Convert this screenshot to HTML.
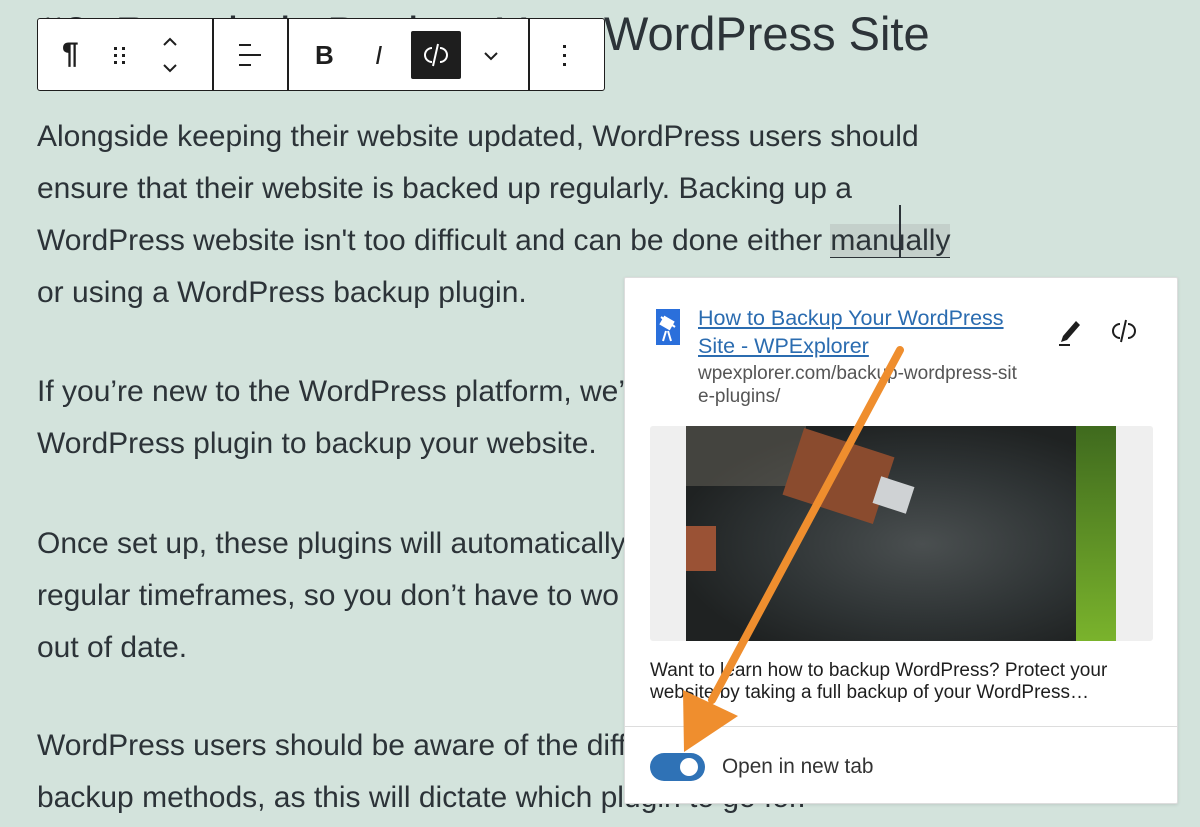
<!DOCTYPE html>
<html><head><meta charset="utf-8"><style>
*{margin:0;padding:0;box-sizing:border-box}
body{width:1200px;height:827px;overflow:hidden;background:#d3e3dc;font-family:"Liberation Sans",sans-serif;color:#2c3338;position:relative}
.h{position:absolute;left:37px;top:6px;font-size:47px;white-space:nowrap;color:#2c3338}
.p{position:absolute;left:37px;font-size:30px;line-height:52px;white-space:nowrap}
.tb{position:absolute;left:37px;top:18px;width:568px;height:73px;background:#fff;border:1.5px solid #1e1e1e;border-radius:3px}
.sep{position:absolute;top:0;bottom:0;width:1.5px;background:#1e1e1e}
.pop{position:absolute;left:624px;top:277px;width:554px;height:527px;background:#fff;border:1px solid #ddd;border-radius:2px;box-shadow:0 1px 3px rgba(0,0,0,.1)}
.ic{position:absolute}
</style></head><body>
<div class="h">#3: Regularly Backup Your WordPress Site</div>
<div class="p" style="top:111px">Alongside keeping their website updated, WordPress users should<br>ensure that their website is backed up regularly. Backing up a<br>WordPress website isn't too difficult and can be done either <span style="background:#c4d0cb;border-bottom:1.5px solid #2c3338">manually</span><br>or using a WordPress backup plugin.</div>
<div style="position:absolute;left:899px;top:205px;width:1.5px;height:52px;background:#2c3338"></div>
<div class="p" style="top:366px">If you’re new to the WordPress platform, we’d<br>WordPress plugin to backup your website.</div>
<div class="p" style="top:518px">Once set up, these plugins will automatically<br>regular timeframes, so you don’t have to wo<br>out of date.</div>
<div class="p" style="top:720px">WordPress users should be aware of the diff<br>backup methods, as this will dictate which plugin to go for.</div>

<div class="tb">
 <div class="sep" style="left:174px"></div>
 <div class="sep" style="left:249px"></div>
 <div class="sep" style="left:490px"></div>
 <div class="ic" style="left:24px;top:18px;font-size:30px;font-weight:bold;color:#1e1e1e">¶</div>
 <svg class="ic" style="left:72px;top:24px" width="20" height="24"><g fill="#1e1e1e"><rect x="4" y="4" width="3" height="3"/><rect x="12" y="4" width="3" height="3"/><rect x="4" y="11" width="3" height="3"/><rect x="12" y="11" width="3" height="3"/><rect x="4" y="18" width="3" height="3"/><rect x="12" y="18" width="3" height="3"/></g></svg>
 <svg class="ic" style="left:122px;top:16px" width="20" height="40" fill="none" stroke="#1e1e1e" stroke-width="2"><path d="M4 10l6-6 6 6M4 30l6 6 6-6"/></svg>
 <svg class="ic" style="left:198px;top:22px" width="28" height="28" fill="none" stroke="#1e1e1e" stroke-width="2"><path d="M3 4h12M3 14h22M3 24h12"/></svg>
 <div class="ic" style="left:277px;top:21px;font-size:26px;font-weight:bold;color:#1e1e1e">B</div>
 <div class="ic" style="left:337px;top:21px;font-size:26px;font-style:italic;color:#1e1e1e">I</div>
 <div class="ic" style="left:373px;top:12px;width:50px;height:48px;background:#1e1e1e;border-radius:2px"></div>
 <svg class="ic" style="left:383px;top:21px" width="30" height="30" fill="none" stroke="#fff" stroke-width="2"><path d="M11 8a7 7 0 0 0 0 14M19 8a7 7 0 0 1 0 14M17 4l-5 22"/></svg>
 <svg class="ic" style="left:443px;top:30px" width="20" height="14" fill="none" stroke="#1e1e1e" stroke-width="2"><path d="M4 4l6 6 6-6"/></svg>
 <svg class="ic" style="left:522px;top:22px" width="10" height="30" fill="#1e1e1e"><rect x="3" y="4" width="3" height="3"/><rect x="3" y="13" width="3" height="3"/><rect x="3" y="22" width="3" height="3"/></svg>
</div>

<div class="pop">
 <div class="ic" style="left:31px;top:31px;width:24px;height:36px;background:#2a6fdb"></div>
 <svg class="ic" style="left:31px;top:31px" width="24" height="36" fill="none" stroke="#fff" stroke-width="2"><path d="M5 8l14 10M10 22l-3 10M12 22l3 10"/><rect x="6" y="10" width="10" height="8" fill="#fff" transform="rotate(30 11 14)"/></svg>
 <div class="ic" style="left:73px;top:26px;font-size:21.5px;line-height:28px;color:#2b6cb0;text-decoration:underline;white-space:nowrap">How to Backup Your WordPress<br>Site - WPExplorer</div>
 <div class="ic" style="left:73px;top:84px;font-size:19px;line-height:23px;color:#555;white-space:nowrap">wpexplorer.com/backup-wordpress-sit<br>e-plugins/</div>
 <svg class="ic" style="left:430px;top:36px" width="30" height="34"><path d="M8 22l13-15 4 4-13 15-6 2z" fill="#1e1e1e"/><rect x="4" y="30" width="11" height="2" fill="#1e1e1e"/></svg>
 <svg class="ic" style="left:484px;top:38px" width="30" height="30" fill="none" stroke="#1e1e1e" stroke-width="2"><path d="M11 8a7 7 0 0 0 0 14M19 8a7 7 0 0 1 0 14M17 4l-5 22"/></svg>
 <div class="ic" style="left:25px;top:148px;width:503px;height:215px;background:#efefef;border-radius:3px"></div>
 <div class="ic" style="left:61px;top:148px;width:430px;height:215px;background:radial-gradient(ellipse at 55% 55%,#4a4f50 0%,#2f3435 45%,#1f2222 75%),#2a2d2d;overflow:hidden">
  <div style="position:absolute;right:0;top:0;width:40px;height:215px;background:linear-gradient(#3f6a1e,#7ab32c)"></div>
  <div style="position:absolute;left:0;top:0;width:120px;height:60px;background:#6a665c;opacity:.5"></div>
  <div style="position:absolute;left:105px;top:15px;width:95px;height:70px;background:#8a4b2e;transform:rotate(18deg)"></div>
  <div style="position:absolute;left:190px;top:55px;width:35px;height:28px;background:#cfd2d4;transform:rotate(18deg)"></div>
  <div style="position:absolute;left:0;top:100px;width:30px;height:45px;background:#9a5235"></div>
 </div>
 <div class="ic" style="left:25px;top:382px;font-size:19px;line-height:22px;color:#1e1e1e;white-space:nowrap">Want to learn how to backup WordPress? Protect your<br>website by taking a full backup of your WordPress…</div>
 <div class="ic" style="left:0;top:448px;width:552px;height:1px;background:#ddd"></div>
 <div class="ic" style="left:25px;top:475px;width:55px;height:28px;background:#2f72b6;border-radius:14px"></div>
 <div class="ic" style="left:55px;top:480px;width:18px;height:18px;background:#fff;border-radius:50%"></div>
 <div class="ic" style="left:97px;top:477px;font-size:20.8px;color:#333">Open in new tab</div>
</div>
<svg style="position:absolute;left:0;top:0" width="1200" height="827"><line x1="900" y1="350" x2="712" y2="700" stroke="#ef8e2e" stroke-width="8" stroke-linecap="round"/><polygon points="684,752 738,716 683,690" fill="#ef8e2e"/></svg>
</body></html>
